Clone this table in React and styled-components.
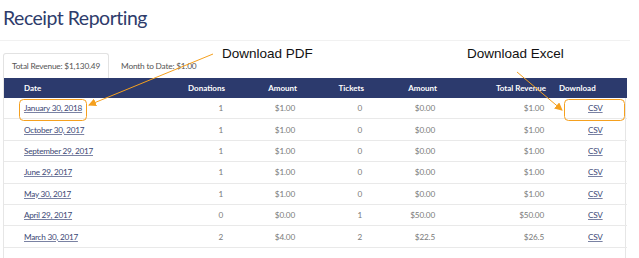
import React from "react";
import styled, { createGlobalStyle } from "styled-components";

const Global = createGlobalStyle`
  html, body { margin: 0; padding: 0; background: #fff; overflow: hidden; }
  body { font-family: "Lato", "Open Sans", sans-serif; }
`;

const Page = styled.div`
  position: relative;
  width: 639px;
  height: 258px;
  padding: 0 13px 0 3px;
  box-sizing: border-box;
  display: flex;
  flex-direction: column;
`;

const Title = styled.h1`
  margin: 0 0 0 -3px;
  padding: 6px 0 0 3px;
  height: 41px;
  width: 630px;
  flex: none;
  font-weight: 400;
  font-size: 19.5px;
  color: #2e3c6b;
  letter-spacing: -0.5px;
  border-bottom: 1px solid #f1f1f1;
  box-sizing: border-box;
`;

const Tabs = styled.div`
  display: flex;
  align-items: flex-end;
  margin-top: 12px;
  height: 25px;
  flex: none;
`;

const Tab = styled.div`
  height: 25px;
  display: flex;
  align-items: center;
  padding: 0 ${(p) => (p.$active ? "8px" : "11px")};
  font-size: 8.3px;
  letter-spacing: -0.2px;
  color: #555;
  box-sizing: border-box;
  border: 1px solid ${(p) => (p.$active ? "#e2e2e2" : "transparent")};
  border-bottom: none;
  border-radius: 3px 3px 0 0;
  background: #fff;
`;

const TableWrap = styled.div`
  flex: 1;
  width: 623px;
  box-sizing: border-box;
  border-left: 1px solid #e6e6e6;
  border-right: 1px solid #e6e6e6;
`;

const Table = styled.table`
  width: 100%;
  border-collapse: collapse;
  table-layout: fixed;
`;

const Th = styled.th`
  background: #2c3a6d;
  color: #fff;
  font-size: 8px;
  font-weight: 700;
  height: 20px;
  padding: 0 ${(p) => (p.$pr ? p.$pr : 6)}px 0 ${(p) => (p.$pl ? p.$pl : 0)}px;
  text-align: ${(p) => p.$align || "right"};
`;

const Tr = styled.tr`
  border-bottom: 1px solid #e9e9e9;
`;

const Td = styled.td`
  height: 20.4px;
  padding: 0 ${(p) => (p.$pr !== undefined ? p.$pr : 8)}px 0 ${(p) => (p.$pl ? p.$pl : 0)}px;
  font-size: 8.2px;
  letter-spacing: -0.15px;
  color: #7a7a7a;
  text-align: ${(p) => p.$align || "right"};
  white-space: nowrap;
`;

const Link = styled.a`
  color: #3b4775;
  text-decoration: underline;
  text-decoration-color: #7a82a3;
  cursor: pointer;
  letter-spacing: -0.25px;
`;

const Overlay = styled.svg`
  position: absolute;
  left: 0;
  top: 0;
  pointer-events: none;
`;

const Note = styled.div`
  position: absolute;
  left: ${(p) => p.$x}px;
  top: ${(p) => p.$y}px;
  font-family: "Liberation Sans", Arial, sans-serif;
  font-size: 13.5px;
  color: #111;
  white-space: nowrap;
`;

const rows = [
  ["January 30, 2018", "1", "$1.00", "0", "$0.00", "$1.00"],
  ["October 30, 2017", "1", "$1.00", "0", "$0.00", "$1.00"],
  ["September 29, 2017", "1", "$1.00", "0", "$0.00", "$1.00"],
  ["June 29, 2017", "1", "$1.00", "0", "$0.00", "$1.00"],
  ["May 30, 2017", "1", "$1.00", "0", "$0.00", "$1.00"],
  ["April 29, 2017", "0", "$0.00", "1", "$50.00", "$50.00"],
  ["March 30, 2017", "2", "$4.00", "2", "$22.5", "$26.5"],
];

const widths = [147, 80, 72, 67, 73, 109, 75];

export default function App() {
  return (
    <>
      <Global />
      <Page>
        <Title>Receipt Reporting</Title>
        <Tabs>
          <Tab $active>Total Revenue: $1,130.49</Tab>
          <Tab>Month to Date: $1.00</Tab>
        </Tabs>
        <TableWrap>
          <Table>
            <colgroup>
              {widths.map((w, i) => (
                <col key={i} style={{ width: w }} />
              ))}
            </colgroup>
            <thead>
              <tr>
                <Th $align="left" $pl={20}>Date</Th>
                <Th>Donations</Th>
                <Th>Amount</Th>
                <Th>Tickets</Th>
                <Th>Amount</Th>
                <Th>Total Revenue</Th>
                <Th $align="left" $pl={7}>Download</Th>
              </tr>
            </thead>
            <tbody>
              {rows.map((r) => (
                <Tr key={r[0]}>
                  <Td $align="left" $pl={20}>
                    <Link>{r[0]}</Link>
                  </Td>
                  <Td>{r[1]}</Td>
                  <Td>{r[2]}</Td>
                  <Td>{r[3]}</Td>
                  <Td>{r[4]}</Td>
                  <Td>{r[5]}</Td>
                  <Td $align="left" $pl={36}>
                    <Link>CSV</Link>
                  </Td>
                </Tr>
              ))}
            </tbody>
          </Table>
        </TableWrap>
        <Note $x={222} $y={46}>Download PDF</Note>
        <Note $x={467} $y={46}>Download Excel</Note>
        <Overlay width="639" height="258" viewBox="0 0 639 258">
          <defs>
            <marker id="ah" markerWidth="8" markerHeight="8" refX="7" refY="4" orient="auto" markerUnits="userSpaceOnUse">
              <path d="M0,0 L8,4 L0,8 Z" fill="#f5a01e" />
            </marker>
          </defs>
          <rect x="19.5" y="99.5" width="67" height="21" rx="4" fill="none" stroke="#f5a01e" strokeWidth="1" />
          <rect x="564.5" y="99.5" width="60" height="21" rx="4" fill="none" stroke="#f5a01e" strokeWidth="1" />
          <line x1="213" y1="54" x2="89" y2="105" stroke="#f5a01e" strokeWidth="1" markerEnd="url(#ah)" />
          <line x1="517" y1="72" x2="562" y2="110" stroke="#f5a01e" strokeWidth="1" markerEnd="url(#ah)" />
        </Overlay>
      </Page>
    </>
  );
}
